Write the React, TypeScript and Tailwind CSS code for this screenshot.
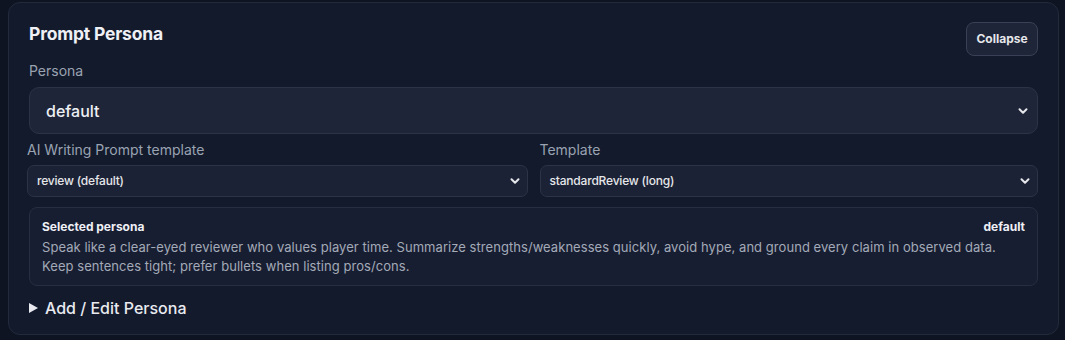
import React from "react";

const Chevron = ({ size = 12 }: { size?: number }) => (
  <svg width={size} height={size} viewBox="0 0 12 12" fill="none">
    <path d="M2.5 4.2 L6 7.7 L9.5 4.2" stroke="#e5e7eb" strokeWidth="2" strokeLinecap="round" strokeLinejoin="round" />
  </svg>
);

export default function App() {
  return (
    <div
      className="w-[1065px] h-[340px] bg-[#0e1421] pt-[2px] pl-[8px] pr-[6px] text-[#e5e7eb]"
      style={{ fontFamily: "Inter, 'Noto Sans', sans-serif" }}
    >
      <div className="h-[333px] rounded-[12px] border border-[#222a3b] bg-[#131a2c] px-[20px] pt-[19px]">
        <div className="flex items-start justify-between">
          <div className="text-[17.5px] font-bold leading-[22px] mt-[1px] text-[#eef0f5] tracking-[-0.2px]">Prompt Persona</div>
          <button className="h-[34px] w-[72px] rounded-[8px] border border-[#3a4156] bg-[#1f2538] text-[12px] font-bold text-[#e5e7eb]">
            Collapse
          </button>
        </div>
        <div className="mt-[6px] text-[14px] leading-[18px] text-[#9aa3b2]">Persona</div>
        <div className="mt-[7px] h-[47px] rounded-[10px] border border-[#2c3346] bg-[#1f2538] flex items-center justify-between pl-[16px] pr-[8px]">
          <span className="text-[16px] font-medium text-[#eef0f5]">default</span>
          <Chevron />
        </div>
        <div className="mt-[7px] grid grid-cols-2 gap-[12px]">
          <div>
            <div className="text-[14px] leading-[18px] text-[#9aa3b2] -ml-[2px]">AI Writing Prompt template</div>
            <div className="mt-[6px] -ml-[2px] h-[32px] rounded-[7px] border border-[#2c3346] bg-[#1c2235] flex items-center justify-between pl-[9px] pr-[6px]">
              <span className="text-[12px] font-medium text-[#e5e7eb] tracking-[-0.2px]">review (default)</span>
              <Chevron />
            </div>
          </div>
          <div>
            <div className="text-[14px] leading-[18px] text-[#9aa3b2]">Template</div>
            <div className="mt-[6px] h-[32px] rounded-[7px] border border-[#2c3346] bg-[#1c2235] flex items-center justify-between pl-[9px] pr-[6px]">
              <span className="text-[12px] font-medium text-[#e5e7eb] tracking-[-0.2px]">standardReview (long)</span>
              <Chevron />
            </div>
          </div>
        </div>
        <div className="mt-[10px] h-[79px] rounded-[8px] border border-[#272e41] bg-[#181e31] px-[12px] pt-[11px]">
          <div className="flex justify-between text-[12px] font-bold leading-[16px] text-[#eef0f5]">
            <span>Selected persona</span>
            <span>default</span>
          </div>
          <div className="mt-[3px] text-[13px] leading-[19px] text-[#a3aab8] tracking-[0.05px]">
            Speak like a clear-eyed reviewer who values player time. Summarize strengths/weaknesses quickly, avoid hype, and ground every claim in observed data.
            <br />
            Keep sentences tight; prefer bullets when listing pros/cons.
          </div>
        </div>
        <div className="mt-[10px] flex items-center gap-[7px] text-[16px] font-medium text-[#e8eaf0]">
          <svg width="9" height="10" viewBox="0 0 9 10">
            <path d="M0 0 L9 5 L0 10 Z" fill="#e8eaf0" />
          </svg>
          <span>Add / Edit Persona</span>
        </div>
      </div>
    </div>
  );
}
